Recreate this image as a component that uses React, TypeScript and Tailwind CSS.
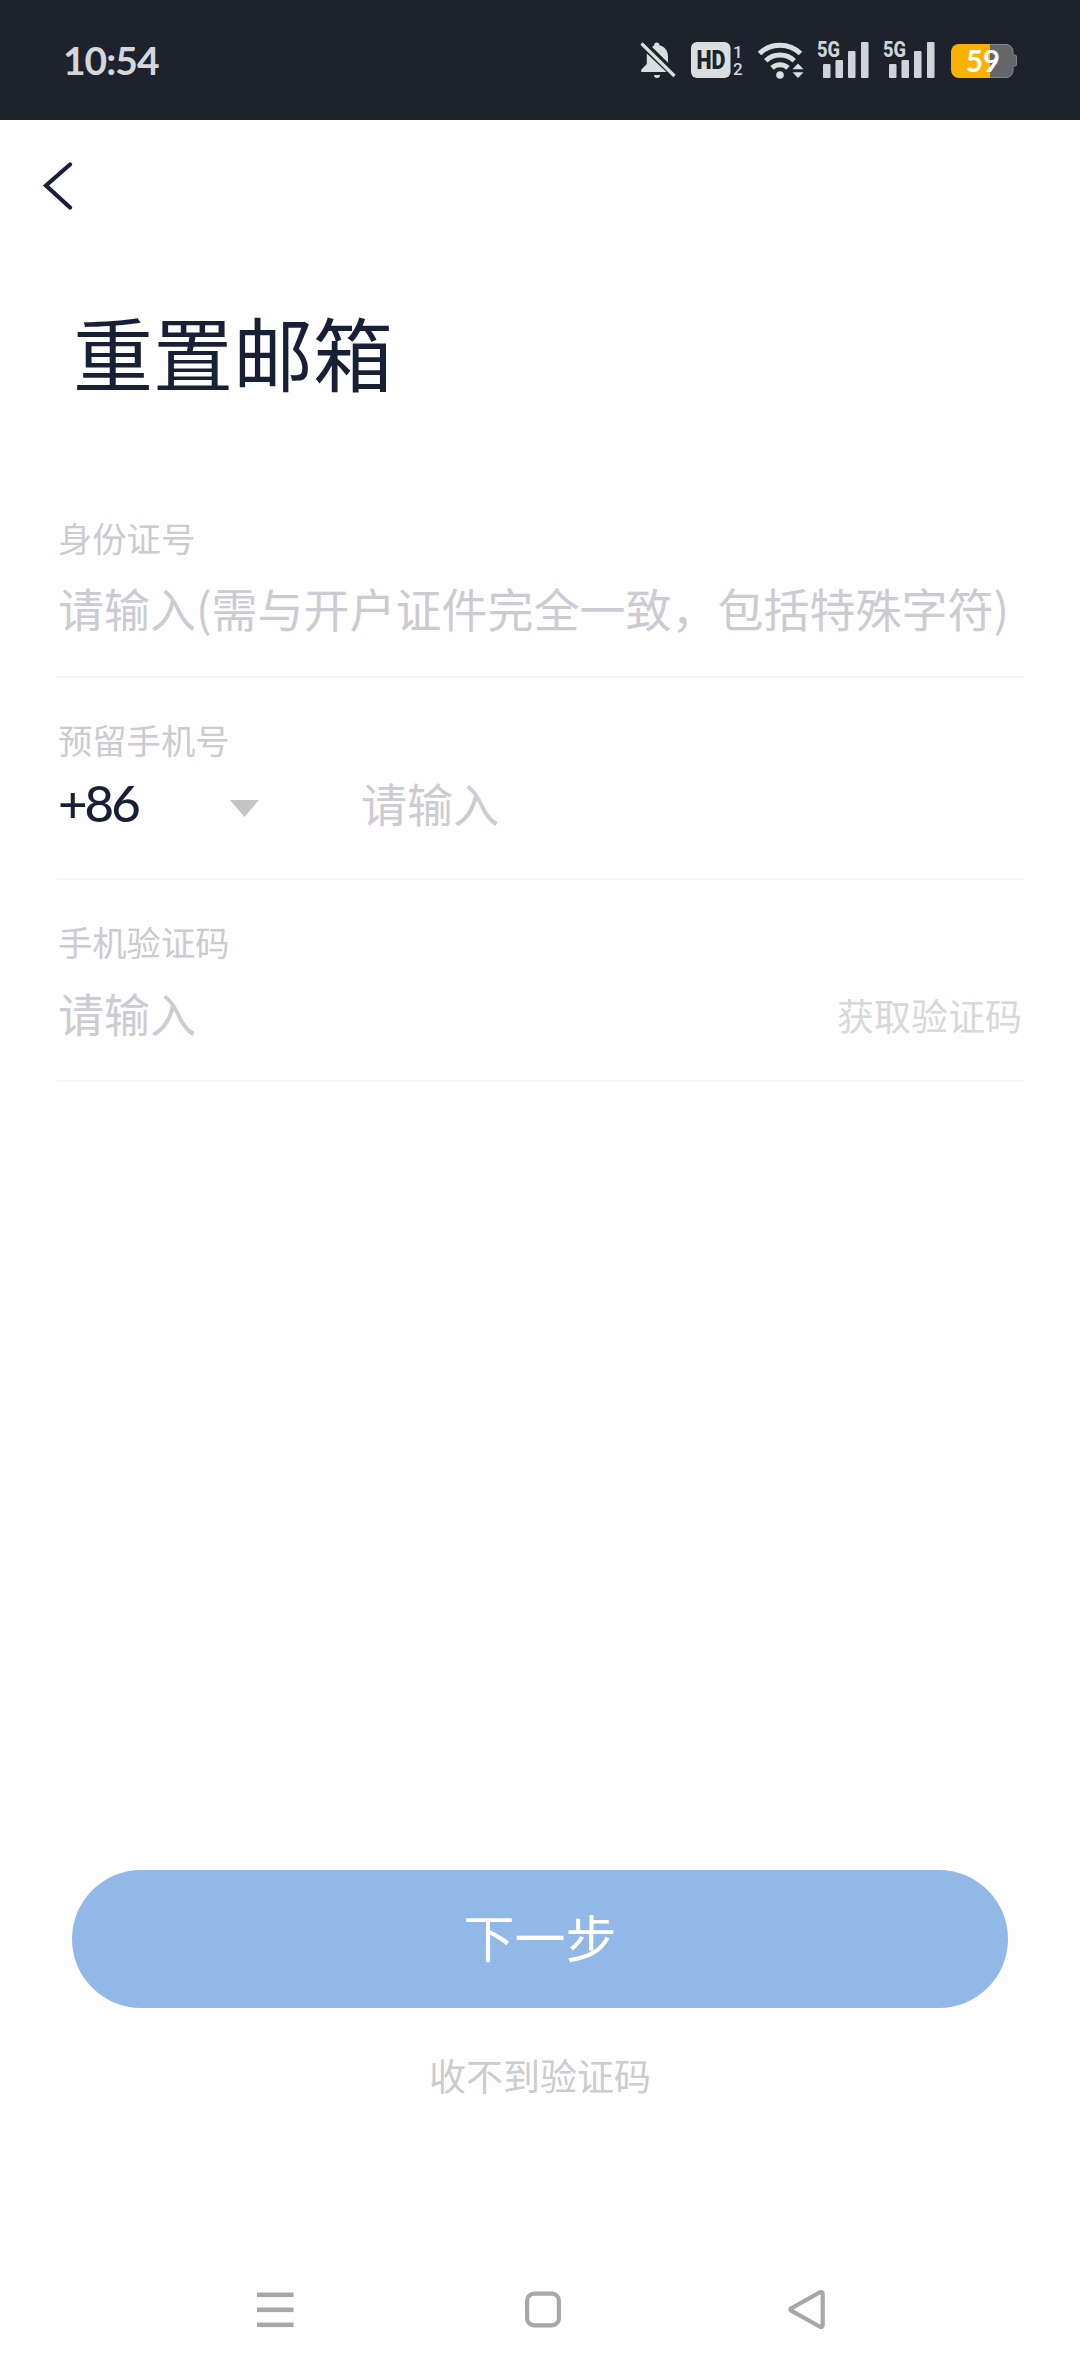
import type { ReactNode } from 'react';

const cjk = "font-['Noto_Sans_CJK_SC',sans-serif]";

function BellOff() {
  return (
    <svg width="36" height="38" viewBox="0 0 36 38" fill="#d9dede">
      <path d="M14.200 4.200a2.600 2.600 0 0 1 5.200 0C24.600 5.500 28 9.500 28 15.500v9.500L11 8.200q1.300-2.800 3.200-4z" />
      <path d="M6.800 12.500 26.500 31H1.200v-2.300l5.600-5.600z" />
      <path d="M14 34h6a3 3 0 0 1-6 0z" />
      <path d="M4 .2 37 32.500" stroke="#1e222c" strokeWidth="3" />
      <path d="M1.500 2.500 34.500 35" stroke="#d9dede" strokeWidth="3.200" />
    </svg>
  );
}

function HdBadge() {
  return (
    <svg width="54" height="38" viewBox="0 0 54 38" className="overflow-visible font-['Roboto',sans-serif]">
      <rect x="0" y="1" width="39.500" height="36" rx="6" fill="#d9dede" />
      <text x="5.500" y="28" fontSize="25" fontWeight="900" fill="#1e222b" textLength="29" lengthAdjust="spacingAndGlyphs">HD</text>
      <text x="42" y="16.500" fontSize="17" fontWeight="500" fill="#d3d7dc">1</text>
      <text x="42" y="34" fontSize="17" fontWeight="500" fill="#d3d7dc">2</text>
    </svg>
  );
}

function Wifi() {
  return (
    <svg width="46" height="38" viewBox="0 0 46 38" fill="none" stroke="#d9dede" strokeWidth="5">
      <path d="M1.500 12.500a29.500 29.500 0 0 1 41 0" />
      <path d="M7.800 19.800a20.500 20.500 0 0 1 28.400 0" />
      <path d="M14 26.800a11.800 11.800 0 0 1 16 0" />
      <circle cx="22" cy="34" r="3.800" fill="#d9dede" stroke="none" />
      <path d="M34.500 28.200 40 22.500l5.500 5.700zM34.500 31.200 40 37l5.500-5.800z" fill="#d9dede" stroke="none" />
    </svg>
  );
}

function Signal() {
  return (
    <svg width="52" height="38" viewBox="0 0 52 38" fill="#d0d4da" className="overflow-visible font-['Roboto',sans-serif]">
      <text x="0" y="16" fontSize="22" fontWeight="800" textLength="23" lengthAdjust="spacingAndGlyphs">5G</text>
      <rect x="6" y="23" width="7.500" height="14" rx="1" />
      <rect x="18.500" y="19" width="7.500" height="18" rx="1" />
      <rect x="31" y="10" width="7.500" height="27" rx="1" />
      <rect x="44" y="1" width="7.500" height="36" rx="1" />
    </svg>
  );
}

function Battery() {
  return (
    <svg width="67" height="38" viewBox="0 0 67 38" className="font-['Lato',sans-serif]">
      <path d="M39 3h16a7 7 0 0 1 7 7v4h2a1.500 1.500 0 0 1 1.500 1.500v8A1.500 1.500 0 0 1 64 25h-2v5a7 7 0 0 1-7 7H39z" fill="#65666c" />
      <path d="M8 3.500h47a7 7 0 0 1 7 7V14h2a1.500 1.500 0 0 1 1.500 1.500v8A1.500 1.500 0 0 1 64 25h-2v4.500a7 7 0 0 1-7 7H8" fill="none" stroke="#85868b" />
      <path d="M39 3v34H8a8 8 0 0 1-8-8V11a8 8 0 0 1 8-8z" fill="#fbb004" />
      <text x="15" y="31" fontSize="30" fontWeight="700" fill="#fff" textLength="34" lengthAdjust="spacingAndGlyphs">59</text>
    </svg>
  );
}

function StatusBar() {
  return (
    <header className="flex h-[120px] items-center justify-between bg-[#1e222c] pl-[63px] pr-[62px]">
      <span className="font-['Lato',sans-serif] text-[39px] font-bold leading-[40px] tracking-[-1px] text-[#d3d7dc]">10:54</span>
      <div className="flex items-center">
        <BellOff />
        <div className="ml-[15px]"><HdBadge /></div>
        <div className="ml-[13px]"><Wifi /></div>
        <div className="ml-[13px]"><Signal /></div>
        <div className="ml-[14px]"><Signal /></div>
        <div className="ml-[16px]"><Battery /></div>
      </div>
    </header>
  );
}

function Field({ label, children }: { label: string; children: ReactNode }) {
  return (
    <section className="flex h-[202px] flex-col border-b-2 border-[#f5f5f6] pl-[1px]">
      <label className="mt-[41px] text-[34.300px] leading-[40px] text-[#cbcbd0]">{label}</label>
      {children}
    </section>
  );
}

function Placeholder({ children }: { children: ReactNode }) {
  return <span className="whitespace-nowrap text-[46px] leading-[60px] text-[#cccbd2]">{children}</span>;
}

function NavBar() {
  return (
    <nav className="flex items-center">
      <svg width="37" height="42" viewBox="0 0 37 42" fill="#a7a7a7" className="ml-[257px]">
        <rect y="3.500" width="36.500" height="4.600" />
        <rect y="18.500" width="36.500" height="4.600" />
        <rect y="33.500" width="36.500" height="4.600" />
      </svg>
      <svg width="36" height="42" viewBox="0 0 36 42" fill="none" stroke="#a7a7a7" strokeWidth="4.200" className="ml-[231px]">
        <rect x="2.100" y="4.600" width="31.800" height="31.800" rx="7" />
      </svg>
      <svg width="38" height="42" viewBox="0 0 38 42" fill="none" stroke="#a7a7a7" strokeWidth="4.200" strokeLinejoin="round" className="ml-[227px]">
        <path d="M3.200 19.300 31.500 3.500Q34.700 2 34.700 5.200V35.800Q34.700 39 31.500 37.500L3.200 21.700Q1.600 20.500 3.200 19.300z" />
      </svg>
    </nav>
  );
}

export default function App() {
  return (
    <div className={`flex h-[2376px] w-[1080px] flex-col bg-[#fefefe] ${cjk}`}>
      <StatusBar />
      <button className="ml-[42px] mt-[42px] w-[32px]" aria-label="返回">
        <svg width="32" height="48" viewBox="0 0 32 48" fill="none" stroke="#182036" strokeWidth="4.200" strokeLinecap="round">
          <path d="M28 2.500 4 23.500 28 45.500" />
        </svg>
      </button>
      <h1 className="ml-[73px] mt-[90px] text-[80px] font-normal leading-[100px] text-[#182036]">重置邮箱</h1>
      <main className="ml-[57px] mt-[76px] w-[967px]">
        <Field label="身份证号">
          <div className="mt-[20px] flex"><Placeholder>请输入(需与开户证件完全一致，包括特殊字符)</Placeholder></div>
        </Field>
        <Field label="预留手机号">
          <div className="mt-[12px] flex items-center">
            <span className="mt-[2px] w-[172px] font-['Lato',sans-serif] text-[51px] font-medium leading-[60px] tracking-[-3px] text-[#182036]">+86</span>
            <svg width="29" height="17" viewBox="0 0 29 17" className="mr-[102px] mt-[13px]" fill="#c4c4c4">
              <path d="M0 0h29L14.500 17z" />
            </svg>
            <Placeholder>请输入</Placeholder>
          </div>
        </Field>
        <Field label="手机验证码">
          <div className="mt-[21px] flex items-center justify-between pr-[2px]">
            <Placeholder>请输入</Placeholder>
            <button className="mt-[6px] text-[37px] leading-[54px] text-[#d8d8d8]">获取验证码</button>
          </div>
        </Field>
      </main>
      <button className="mx-[72px] mt-[788px] h-[138px] rounded-full bg-[#92b8e7] pb-[6px] text-[51px] leading-[60px] text-white">下一步</button>
      <button className="mt-[42px] text-[37px] leading-[50px] text-[#cccbd0]">收不到验证码</button>
      <div className="mt-auto pb-[45px]"><NavBar /></div>
    </div>
  );
}
